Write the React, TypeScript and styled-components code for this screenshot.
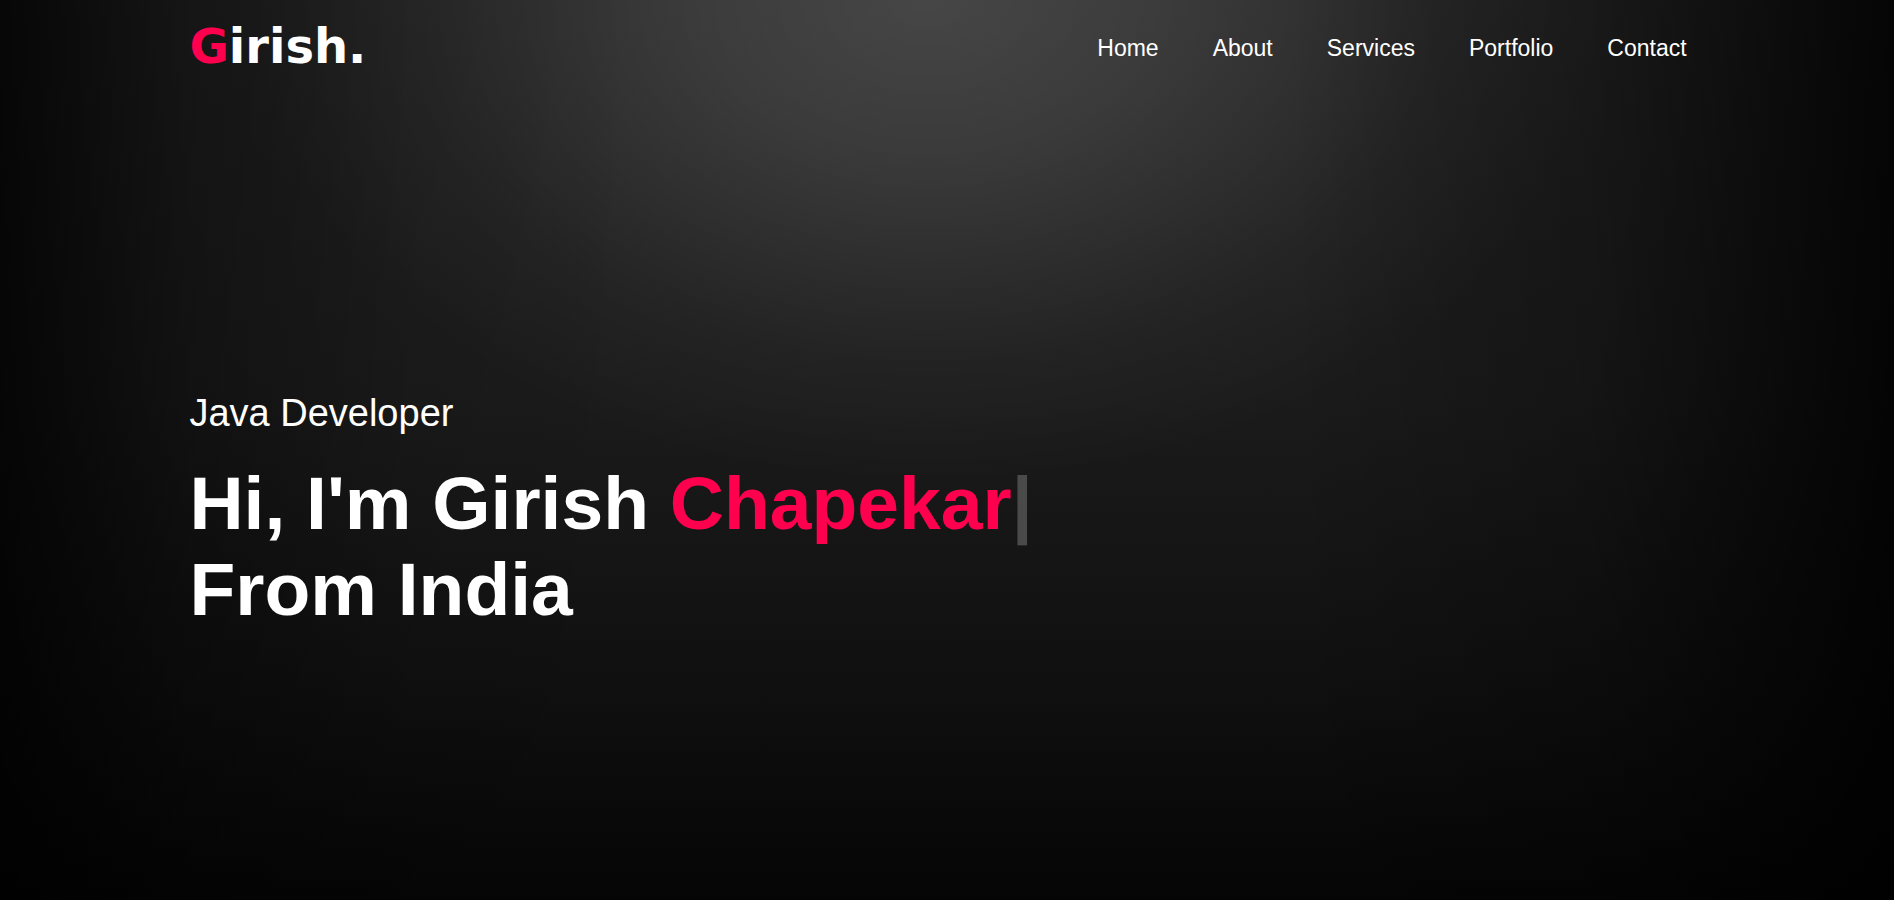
import React from "react";
import styled, { createGlobalStyle } from "styled-components";

const GlobalStyle = createGlobalStyle`
  * { box-sizing: border-box; margin: 0; padding: 0; }
  body { background: #000; color: #fff; font-family: "Liberation Sans", Arial, sans-serif; }
`;

const Page = styled.div`
  min-height: 100vh;
  padding: 22px 10%;
  background: linear-gradient(to right, rgba(0, 0, 0, 0.8) 0%, rgba(0, 0, 0, 0.35) 10%, rgba(0, 0, 0, 0.08) 22%, rgba(0, 0, 0, 0) 34%, rgba(0, 0, 0, 0) 68%, rgba(0, 0, 0, 0.25) 84%, rgba(0, 0, 0, 0.85) 100%),
    radial-gradient(ellipse 36% 54% at 49% 0%, rgba(255, 255, 255, 0.17), rgba(255, 255, 255, 0.12) 33%, rgba(255, 255, 255, 0.03) 75%, rgba(255, 255, 255, 0)),
    linear-gradient(to bottom, #212121 0%, #1b1b1b 44%, #101010 76%, #050505 100%);
`;

const Nav = styled.nav`
  display: flex;
  align-items: center;
  justify-content: space-between;
`;

const Logo = styled.a`
  color: #fff;
  font: bold 48px/48px "DejaVu Sans", sans-serif;
  text-decoration: none;
`;

const Accent = styled.span`
  color: #ff004f;
`;

const Menu = styled.ul`
  display: flex;
  gap: 54px;
  padding: 4px 18px 0 0;
  list-style: none;
`;

const MenuLink = styled.a`
  color: #fff;
  font-size: 23px;
  line-height: 28px;
  text-decoration: none;
`;

const Intro = styled.header`
  margin-top: 319px;
`;

const Role = styled.p`
  font-size: 38px;
  line-height: 48px;
`;

const Title = styled.h1`
  margin-top: 23px;
  font-size: 75px;
  line-height: 86px;
`;

const Cursor = styled.span`
  color: #4a4a4a;
`;

const links = ["Home", "About", "Services", "Portfolio", "Contact"];

export default function App() {
  return (
    <Page>
      <GlobalStyle />
      <Nav>
        <Logo href="#home"><Accent>G</Accent>irish.</Logo>
        <Menu>
          {links.map((name) => (
            <li key={name}><MenuLink href={`#${name.toLowerCase()}`}>{name}</MenuLink></li>
          ))}
        </Menu>
      </Nav>
      <Intro>
        <Role>Java Developer</Role>
        <Title>Hi, I'm Girish <Accent>Chapekar</Accent><Cursor>|</Cursor><br />From India</Title>
      </Intro>
    </Page>
  );
}
